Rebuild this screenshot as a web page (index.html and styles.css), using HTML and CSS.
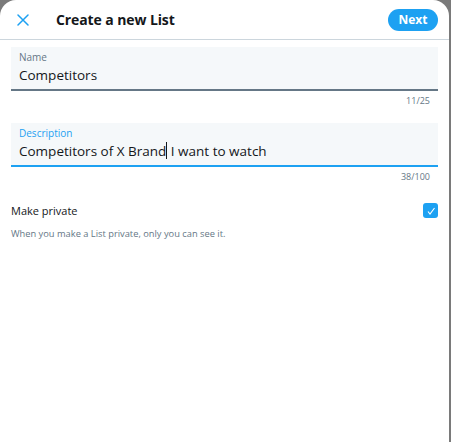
FILE: index.html
```html
<!DOCTYPE html>
<html lang="en">
<head>
  <meta charset="UTF-8" />
  <meta name="viewport" content="width=device-width, initial-scale=1.0"/>
  <title>Create a new List</title>
  <link rel="stylesheet" href="styles.css">
</head>
<body>
  <div class="modal">
    <div class="modal-header">
      <button class="btn-close" type="button" aria-label="Close">
        <svg viewBox="0 0 12 12" width="12" height="12">
          <path d="M1 1 L11 11 M11 1 L1 11" stroke="#1da1f2" stroke-width="1.5" fill="none" stroke-linecap="round"/>
        </svg>
      </button>
      <h1>Create a new List</h1>
      <button class="btn-next" type="button">Next</button>
    </div>

    <div class="modal-body">
      <div class="field">
        <label>Name</label>
        <div class="field-value">Competitors</div>
      </div>
      <div class="counter">11/25</div>

      <div class="field field-active">
        <label>Description</label>
        <div class="field-value">Competitors of X Brand<span class="caret"></span> I want to watch</div>
      </div>
      <div class="counter">38/100</div>

      <div class="private-row">
        <span>Make private</span>
        <span class="checkbox">
          <svg viewBox="0 0 14 14" width="14" height="14">
            <path d="M4 7.5 L6 10 L10.5 4" stroke="#fff" stroke-width="1.1" fill="none"/>
          </svg>
        </span>
      </div>
      <p class="help">When you make a List private, only you can see it.</p>
    </div>
  </div>
</body>
</html>
```

FILE: styles.css
```css
body {
  margin: 0;
  background: #7a7a7a;
  font-family: 'Open Sans', 'Noto Sans', sans-serif;
  color: #14171a;
}

.modal {
  width: 449px;
  height: 442px;
  background: #fff;
  border-radius: 16px 16px 0 0;
}

.modal-header {
  height: 39px;
  border-bottom: 1px solid #ccd6dd;
  display: flex;
  align-items: center;
  padding: 0 11px;
  box-sizing: content-box;
}

.btn-close {
  width: 22px;
  height: 22px;
  padding: 0;
  margin-left: 1px;
  border: none;
  background: none;
  display: flex;
  align-items: center;
  justify-content: center;
}

.modal-header h1 {
  flex: 1;
  margin: 0 0 0 22px;
  font-size: 14px;
  font-weight: 700;
  letter-spacing: -0.1px;
}

.btn-next {
  width: 50px;
  height: 22px;
  padding: 0;
  border: none;
  border-radius: 11px;
  background: #1da1f2;
  color: #fff;
  font-family: inherit;
  font-size: 12px;
  font-weight: 700;
}

.modal-body {
  padding: 7px 11px 0;
}

.field {
  background: #f5f8fa;
  border-bottom: 2px solid #657786;
  height: 39px;
  padding: 3px 8px 0;
  box-sizing: content-box;
}

.field label {
  display: block;
  font-size: 10px;
  line-height: 14px;
  color: #657786;
}

.field-value {
  font-size: 13.5px;
  line-height: 22px;
  color: #14171a;
}

.field-active {
  border-bottom-color: #1da1f2;
}

.field-active label {
  color: #1da1f2;
}

.caret {
  display: inline-block;
  width: 1px;
  height: 17px;
  background: #14171a;
  vertical-align: -3px;
}

.counter {
  text-align: right;
  font-size: 9px;
  line-height: 14px;
  color: #657786;
  padding: 3px 8px 0 0;
  margin-bottom: 15px;
}

.private-row {
  display: flex;
  justify-content: space-between;
  align-items: center;
  margin-top: 19px;
  font-size: 11px;
}

.checkbox {
  width: 15px;
  height: 15px;
  border-radius: 3px;
  background: #1da1f2;
  display: flex;
  align-items: center;
  justify-content: center;
}

.help {
  margin: 9px 0 0;
  font-size: 9.3px;
  color: #657786;
}
```
